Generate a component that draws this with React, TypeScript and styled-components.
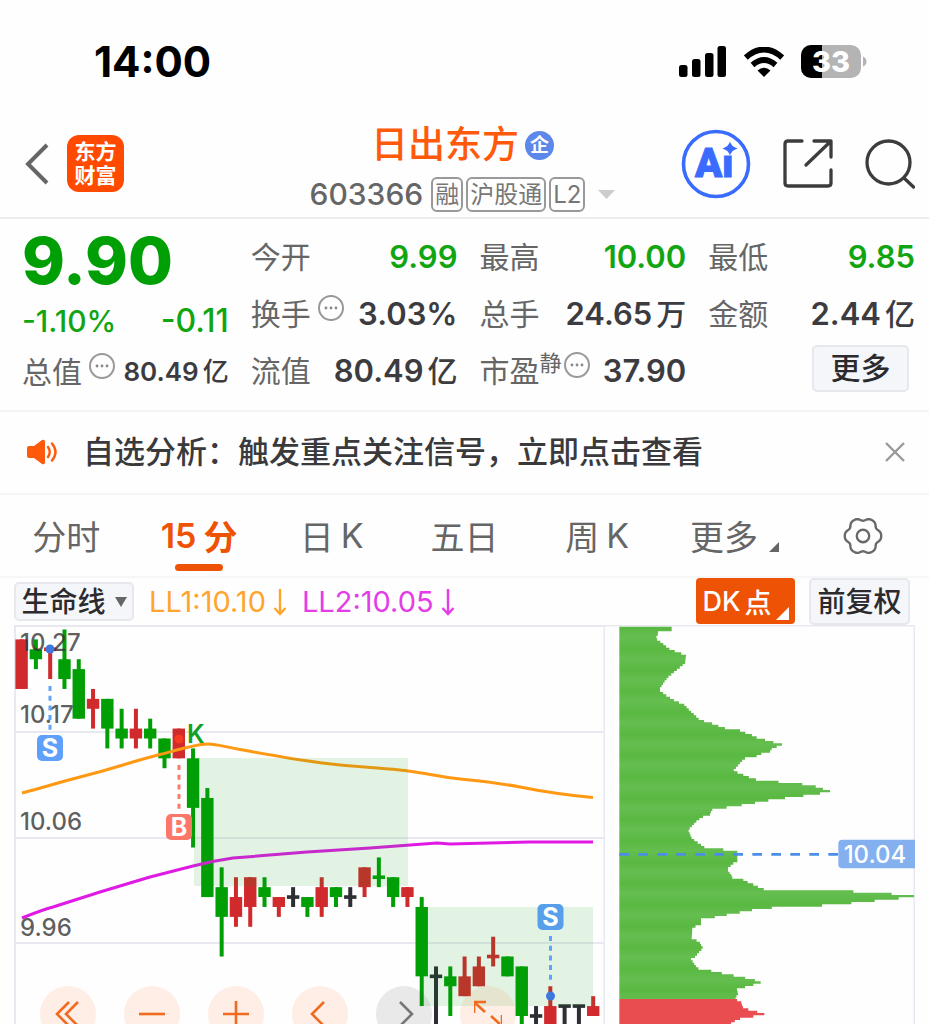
import React from "react";
import styled, { createGlobalStyle } from "styled-components";

const GlobalStyle = createGlobalStyle`
  *, *::before, *::after { box-sizing: border-box; }
  body {
    margin: 0;
    background: #fefefe;
    font-family: Inter, "Noto Sans CJK SC", sans-serif;
    color: #333;
  }
  button { font: inherit; color: inherit; margin: 0; padding: 0; border: 0; background: none; cursor: pointer; }
  svg { display: block; }
`;

const ORANGE = "#ee5205";
const UP = "#d02a2c";
const DOWN = "#009f05";
const FLAT = "#2c2f33";

const Screen = styled.main`
  display: flex;
  flex-direction: column;
  height: 100vh;
  overflow: hidden;
  background: #fefefe;
`;

const StatusBar = styled.div`
  display: flex;
  align-items: center;
  justify-content: space-between;
  flex: none;
  height: 110px;
  padding: 13px 62px 0 94px;
`;

const Clock = styled.time`
  font-size: 42px;
  font-weight: 700;
  line-height: 48px;
  color: #000;
`;

const StatusIcons = styled.div`
  display: flex;
  align-items: center;
  gap: 17px;
`;

const Header = styled.header`
  display: grid;
  grid-template-columns: 1fr auto 1fr;
  align-items: center;
  flex: none;
  height: 109px;
  padding: 0 14px 0 25px;
  border-bottom: 2px solid #ededed;
`;

const HeaderSide = styled.div<{ $end?: boolean; $gap: number }>`
  display: flex;
  align-items: center;
  justify-content: ${(p) => (p.$end ? "flex-end" : "flex-start")};
  gap: ${(p) => p.$gap}px;
`;

const IconButton = styled.button`
  display: flex;
  align-items: center;
  justify-content: center;
`;

const BrandLogo = styled.a`
  display: grid;
  place-content: center;
  width: 57px;
  height: 57px;
  border-radius: 12px;
  background: #ff4a00;
  color: #fff;
  font-size: 21px;
  font-weight: 700;
  line-height: 24px;
  text-decoration: none;
`;

const Identity = styled.div`
  display: flex;
  flex-direction: column;
  align-items: center;
  gap: 10px;
  margin-right: 15px;
  padding-top: 8px;
`;

const NameRow = styled.div`
  display: flex;
  align-items: center;
  gap: 6px;
`;

const StockName = styled.h1`
  margin: 0;
  font-size: 37px;
  font-weight: 500;
  line-height: 44px;
  color: #ff5a0a;
`;

const KindBadge = styled.span`
  display: grid;
  place-items: center;
  width: 29px;
  height: 29px;
  border-radius: 50%;
  background: #5d88ea;
  color: #fff;
  font-size: 19px;
  font-weight: 700;
  line-height: 19px;
`;

const CodeRow = styled.div`
  display: flex;
  align-items: center;
  gap: 3px;
  height: 35px;
`;

const Code = styled.span`
  margin-right: 5px;
  font-size: 30px;
  font-weight: 500;
  line-height: 35px;
  color: #666;
`;

const Tag = styled.span`
  height: 35px;
  padding: 0 2px;
  border: 2px solid #999;
  border-radius: 6px;
  font-size: 24px;
  line-height: 31px;
  color: #777;
`;

const Caret = styled.svg`
  margin-left: 10px;
`;

const Quote = styled.section`
  display: grid;
  grid-template-columns: repeat(4, 1fr);
  column-gap: 22px;
  flex: none;
  height: 193px;
  padding: 9px 14px 11px 22px;
  border-bottom: 2px solid #f4f4f4;
`;

const Column = styled.div<{ $lead?: boolean }>`
  display: grid;
  grid-template-rows: ${(p) => (p.$lead ? "66px 54px 48px" : "57px 57px 57px")};
  align-items: center;
  align-content: start;
`;

const Price = styled.strong`
  font-size: 65px;
  font-weight: 800;
  line-height: 66px;
  color: ${DOWN};
`;

const Row = styled.div`
  display: flex;
  align-items: center;
  justify-content: space-between;
  white-space: nowrap;
`;

const Label = styled.span`
  display: flex;
  align-items: center;
  font-size: 30px;
  line-height: 40px;
  color: #666;
`;

const Sup = styled.sup`
  align-self: flex-start;
  font-size: 22px;
  line-height: 24px;
`;

const InfoButton = styled(IconButton)<{ $tight?: boolean }>`
  margin: 0 0 12px ${(p) => (p.$tight ? 2 : 7)}px;
`;

const Value = styled.span<{ $down?: boolean; $size?: number; $weight?: number }>`
  display: flex;
  align-items: center;
  gap: 4px;
  font-size: ${(p) => p.$size ?? 31}px;
  font-weight: ${(p) => p.$weight ?? 600};
  line-height: 40px;
  color: ${(p) => (p.$down ? "#12a512" : "#3c3c40")};
`;

const Unit = styled.span<{ $size?: number }>`
  font-size: ${(p) => p.$size ?? 30}px;
  font-weight: 500;
`;

const Chip = styled.button<{ $w: number; $h: number; $size: number }>`
  display: flex;
  align-items: center;
  justify-content: center;
  gap: 9px;
  width: ${(p) => p.$w}px;
  height: ${(p) => p.$h}px;
  border: 2px solid #e7e8ed;
  border-radius: 5px;
  background: #f5f6f9;
  color: #2b2b2e;
  font-size: ${(p) => p.$size}px;
  font-weight: 500;
  line-height: 1;
`;

const MoreCell = styled.div`
  display: flex;
  justify-content: flex-end;
  padding: 0 6px 5px 0;
`;

const Notice = styled.section`
  display: flex;
  align-items: center;
  flex: none;
  height: 83px;
  padding: 0 24px 2px 26px;
  border-bottom: 2px solid #f4f4f4;
`;

const NoticeLink = styled.a`
  flex: 1;
  margin-left: 25px;
  font-size: 31px;
  font-weight: 500;
  line-height: 40px;
  white-space: nowrap;
  color: #3a3a3c;
  text-decoration: none;
`;

const Tabs = styled.nav`
  display: grid;
  grid-template-columns: repeat(7, 1fr);
  flex: none;
  height: 83px;
  border-bottom: 2px solid #f6f6f6;
`;

const Tab = styled.button<{ $active?: boolean; $menu?: boolean }>`
  position: relative;
  display: flex;
  align-items: center;
  justify-content: center;
  gap: 7px;
  padding-left: ${(p) => (p.$menu ? 9 : 0)}px;
  font-size: 34px;
  font-weight: ${(p) => (p.$active ? 600 : 400)};
  color: ${(p) => (p.$active ? ORANGE : "#666")};

  &::after {
    content: "";
    display: ${(p) => (p.$active ? "block" : "none")};
    position: absolute;
    bottom: 5px;
    width: 48px;
    height: 7px;
    border-radius: 4px;
    background: ${ORANGE};
  }
`;

const CornerMark = styled.svg`
  align-self: flex-end;
  margin: 0 0 24px 4px;
`;

const Toolbar = styled.div`
  display: flex;
  align-items: center;
  flex: none;
  height: 47px;
  padding: 0 19px 0 14px;
`;

const Indicator = styled.span<{ $color: string }>`
  display: flex;
  align-items: center;
  gap: 7px;
  margin-left: 15px;
  font-size: 29px;
  line-height: 40px;
  color: ${(p) => p.$color};
`;

const ToolbarEnd = styled.div`
  display: flex;
  gap: 14px;
  margin-left: auto;
`;

const SignalButton = styled.button`
  display: flex;
  align-items: center;
  justify-content: center;
  gap: 4px;
  width: 99px;
  height: 46px;
  border-radius: 4px;
  background: ${ORANGE};
  color: #fff;
  font-size: 27px;
  font-weight: 500;
`;

const SignalCorner = styled.svg`
  align-self: flex-end;
  margin-bottom: 4px;
`;

const Chart = styled.section`
  position: relative;
  display: flex;
  align-items: flex-start;
  flex: 1;
  min-height: 0;
  margin: 0 14px;
  overflow: hidden;
`;

const PlotPane = styled.div<{ $share: number }>`
  flex: ${(p) => p.$share} 1 0;
  min-width: 0;

  svg { width: 100%; height: auto; font-family: Inter, sans-serif; }
`;

const Controls = styled.div`
  position: absolute;
  left: 26px;
  bottom: -18px;
  display: flex;
  gap: 28px;
`;

const RoundButton = styled.button<{ $muted?: boolean }>`
  display: grid;
  place-items: center;
  width: 56px;
  height: 56px;
  border-radius: 50%;
  background: ${(p) => (p.$muted ? "rgba(60, 60, 60, 0.11)" : "rgba(255, 110, 40, 0.11)")};
  color: ${(p) => (p.$muted ? "#777" : "#f06a20")};
`;

const Info = ({ label, tight }: { label: string; tight?: boolean }) => (
  <InfoButton $tight={tight} aria-label={label}>
    <svg width="26" height="26" viewBox="0 0 26 26">
      <circle cx="13" cy="13" r="12" fill="none" stroke="#999" strokeWidth="2" />
      <circle cx="8" cy="13" r="1.4" fill="#888" />
      <circle cx="13" cy="13" r="1.4" fill="#888" />
      <circle cx="18" cy="13" r="1.4" fill="#888" />
    </svg>
  </InfoButton>
);

const DownArrow = () => (
  <svg width="14" height="28" viewBox="0 0 14 28" fill="none" stroke="currentColor" strokeWidth="2.4">
    <path d="M7 1V25.500M1.500 20L7 26L12.500 20" />
  </svg>
);

const gearPath =
  Array.from({ length: 120 }, (_, i) => {
    const a = (i / 120) * Math.PI * 2;
    const r = 17 + 1.5 * Math.cos(6 * a) - 0.3 * Math.cos(12 * a);
    return `${i ? "L" : "M"}${(20 + r * Math.cos(a)).toFixed(2)} ${(20 + r * Math.sin(a)).toFixed(2)}`;
  }).join("") + "Z";

type Kind = "u" | "d" | "f";
/* kind, high, body top, body bottom, low: counted in price ticks below the top of the scale */
const candles: [Kind, number, number, number, number][] = [
  ["u", 0, 0, 5, 5], ["d", 0, 1, 2, 3], ["u", 1, 1, 1, 4], ["d", -1, 2, 4, 5],
  ["d", 2, 3, 8, 8], ["u", 5, 6, 7, 9], ["d", 6, 6, 9, 11], ["d", 7, 9, 10, 11],
  ["u", 7, 9, 10, 11], ["d", 8, 9, 10, 11], ["d", 10, 10, 12, 13], ["u", 9, 9, 12, 12],
  ["d", 11, 12, 17, 21], ["d", 15, 16, 26, 26], ["d", 23, 25, 28, 32], ["u", 24, 26, 28, 29],
  ["u", 24, 24, 27, 29], ["d", 24, 25, 26, 27], ["u", 26, 26, 27, 28], ["f", 25, 26, 26, 27],
  ["d", 26, 26, 27, 28], ["u", 24, 25, 27, 28], ["d", 25, 25, 26, 27], ["f", 25, 26, 26, 27],
  ["u", 23, 23, 25, 26], ["d", 22, 24, 24, 25], ["d", 24, 24, 26, 27], ["u", 25, 25, 26, 27],
  ["d", 26, 27, 34, 37], ["f", 33, 34, 34, 40], ["d", 33, 34, 35, 38], ["u", 32, 34, 36, 36],
  ["u", 32, 33, 35, 35], ["u", 30, 32, 32, 33], ["d", 32, 32, 34, 34], ["d", 33, 33, 38, 40],
  ["f", 37, 38, 38, 40], ["u", 35, 37, 40, 40], ["f", 37, 37, 37, 40], ["f", 37, 37, 37, 40],
  ["u", 36, 37, 38, 38],
];
const tickY = (t: number) => 639.4 + t * 9.91;
const candleX = (i: number) => 21.6 + i * 14.29;
const candleColor: Record<Kind, string> = { u: UP, d: DOWN, f: FLAT };

const Marker = ({ x, y, letter, color }: { x: number; y: number; letter: string; color: string }) => (
  <g>
    <rect x={x - 13} y={y - 13} width="26" height="26" rx="5" fill={color} />
    <text x={x} y={y + 9} textAnchor="middle" fontSize="25" fontWeight="700" fill="#fff">{letter}</text>
  </g>
);

const CandlePlot = () => (
  <svg viewBox="14 625 591 399" role="img" aria-label="15分 K线">
    <g stroke="#e8e9f0" strokeWidth="2">
      <path d="M14 626H605M15 626V1024M604.500 626V1024M15 732H604M15 838H604M15 943H604" fill="none" />
    </g>
    {candles.map(([k, hi, top, bot, lo], i) => {
      const x = candleX(i);
      const flat = top === bot;
      return (
        <g key={i} fill={candleColor[k]}>
          <rect x={x - 2} y={tickY(hi)} width="4" height={tickY(lo) - tickY(hi)} />
          <rect x={x - 6.2} y={flat ? tickY(top) - 1.8 : tickY(top)} width="12.4" height={flat ? 3.6 : tickY(bot) - tickY(top)} />
        </g>
      );
    })}
    <g fill="none" strokeWidth="3" strokeLinejoin="round">
      <path stroke="#ff9812" d="M22 793C42 788 60 782 80 777S110 769 123 765S146 758 158 755S176 750 187 747.500S200 744 208 744S226 747 240 749.500S290 759 322 763S385 768 408 771S440 777 460 779S500 783 520 787S565 795 593 797.500" />
      <path stroke="#e01ae4" d="M22 918C32 914 42 910 53 907L100 892L150 877L193 866Q212 861 233 858L307 852L370 848L437 843L450 844L530 842L593 842" />
    </g>
    <g fill="#0aa018" fillOpacity="0.112">
      <rect x="194" y="758" width="214" height="128" />
      <rect x="422" y="907" width="171" height="99" />
    </g>
    <g fontSize="24" fontWeight="500" fill="#333" fillOpacity="0.78">
      <text x="20" y="651">10.27</text>
      <text x="20" y="723">10.17</text>
      <text x="20" y="830">10.06</text>
      <text x="20" y="936">9.96</text>
    </g>
    <g strokeWidth="3" strokeDasharray="5 4.700">
      <path d="M50 686V730M550.500 936V980" stroke="#5fa3fb" />
      <path d="M179 765V809" stroke="#fb7b6b" />
    </g>
    <g fill="#3f78dc">
      <circle cx="50" cy="649" r="4.500" />
      <circle cx="550.500" cy="996" r="4.500" />
    </g>
    <circle cx="179" cy="739" r="4.500" fill="#f53a22" />
    <Marker x={50} y={748} letter="S" color="#5fa0fb" />
    <Marker x={179} y={827} letter="B" color="#fb7868" />
    <Marker x={550.5} y={917} letter="S" color="#579fea" />
    <text x="187" y="743" fontSize="25" fontWeight="600" fill="#12a022">K</text>
  </svg>
);

/* [depth, reach] pairs of the chip distribution, at three units to the pixel */
const profile: [number, number][] = [
  [20, 200], [27, 200], [30, 160], [45, 158], [55, 152], [70, 172], [85, 190], [92, 205], [100, 228],
  [108, 243], [130, 240], [150, 215], [175, 185], [210, 162], [235, 195], [255, 238], [275, 258],
  [300, 285], [310, 320], [325, 360], [333, 405], [345, 440], [355, 455], [362, 480], [368, 505],
  [374, 531], [380, 515], [386, 500], [395, 495], [405, 455], [413, 420], [430, 405], [452, 385],
  [465, 415], [478, 448], [485, 515], [491, 582], [498, 628], [505, 648], [512, 675], [518, 645],
  [524, 595], [532, 540], [540, 490], [547, 450], [553, 410], [561, 365], [568, 322], [582, 315],
  [595, 283], [630, 250], [655, 260], [685, 303], [690, 355], [697, 397], [720, 397], [747, 366],
  [770, 382], [776, 373], [780, 415], [795, 445], [811, 485], [816, 745], [823, 860], [830, 927],
  [838, 860], [844, 792], [852, 715], [858, 630], [865, 465], [873, 430], [880, 390], [886, 357],
  [893, 322], [898, 288], [910, 288], [925, 262], [955, 260], [965, 283], [985, 293], [1010, 270],
  [1017, 258], [1045, 277], [1050, 308], [1058, 343], [1065, 378], [1071, 410], [1078, 440],
  [1085, 467], [1092, 445], [1098, 420], [1105, 395], [1120, 399], [1138, 390], [1145, 408],
  [1165, 415], [1172, 445], [1182, 478], [1188, 445], [1195, 405], [1214, 370],
];
const reachAt = (y: number) => {
  const i = Math.max(1, profile.findIndex(([py]) => py >= y));
  const [y0, x0] = profile[i - 1];
  const [y1, x1] = profile[i];
  return x0 + ((x1 - x0) * Math.min(1, Math.max(0, (y - y0) / (y1 - y0))));
};
const STEP = 7;
const outline = (from: number, to: number) => {
  let d = `M43 ${from}`;
  for (let y = from; y < to; y += STEP) {
    const end = Math.min(y + STEP, to);
    const peaks = profile.filter(([py]) => py >= y && py < end).map(([, x]) => x);
    d += `H${Math.max(reachAt((y + end) / 2), ...peaks).toFixed(1)}V${end}`;
  }
  return d + "H43Z";
};

const ProfilePlot = () => (
  <svg viewBox="0 15 930 1197" role="img" aria-label="筹码分布">
    <defs>
      <linearGradient id="bands" gradientUnits="userSpaceOnUse" x1="0" y1="20" x2="0" y2="84" spreadMethod="repeat">
        <stop offset="0" stopColor="#58b840" />
        <stop offset="0.5" stopColor="#65be50" />
        <stop offset="1" stopColor="#5ab842" />
      </linearGradient>
    </defs>
    <path d="M0 17H930M928 17V1212" stroke="#e8e9f0" strokeWidth="5" fill="none" />
    <path d={outline(20, 1137)} fill="url(#bands)" />
    <path d={outline(1137, 1212)} fill="#ea4d4f" />
    <path d="M43 703H700" stroke="#4a8ee8" strokeWidth="8" strokeDasharray="29 28" />
    <path d="M712 659H930V745H712Q700 745 700 733V671Q700 659 712 659Z" fill="#84b0ef" />
    <text x="716" y="728" fontSize="72" fontWeight="500" fill="#fff">10.04</text>
  </svg>
);

const stroke = { fill: "none", stroke: "currentColor", strokeWidth: 2.6 } as const;

export default function App() {
  return (
    <>
      <GlobalStyle />
      <Screen>
        <StatusBar>
          <Clock>14:00</Clock>
          <StatusIcons>
            <svg width="48" height="31" viewBox="0 0 48 31" fill="#000">
              <rect x="0" y="19" width="8.500" height="12" rx="2.500" />
              <rect x="13" y="13" width="8.500" height="18" rx="2.500" />
              <rect x="26" y="7" width="8.500" height="24" rx="2.500" />
              <rect x="38.500" y="0" width="8.500" height="31" rx="2.500" />
            </svg>
            <svg width="40" height="30" viewBox="0 0 40 30" fill="none" stroke="#000" strokeWidth="5.800">
              <path d="M1.800 10.500Q20 -5.500 38.200 10.500" />
              <path d="M8.500 18Q20 8 31.500 18" />
              <path d="M13.500 23.500Q20 18 26.500 23.500L20 30Z" fill="#000" stroke="none" />
            </svg>
            <svg width="66" height="33" viewBox="0 0 66 33">
              <clipPath id="cell"><rect width="60" height="33" rx="10" /></clipPath>
              <g clipPath="url(#cell)">
                <rect width="60" height="33" fill="#b4b4b4" />
                <rect width="21" height="33" fill="#000" />
              </g>
              <path d="M62 11.500Q65.500 13 65.500 16.500T62 21.500Z" fill="#b4b4b4" />
              <text x="30" y="27" textAnchor="middle" fontSize="29" fontWeight="800" fill="#fff">33</text>
            </svg>
          </StatusIcons>
        </StatusBar>

        <Header>
          <HeaderSide $gap={18}>
            <IconButton aria-label="返回">
              <svg width="24" height="42" viewBox="0 0 24 42" fill="none" stroke="#666" strokeWidth="4">
                <path d="M22 2L3 21L22 40" />
              </svg>
            </IconButton>
            <BrandLogo href="#home">
              <span>东方</span>
              <span>财富</span>
            </BrandLogo>
          </HeaderSide>
          <Identity>
            <NameRow>
              <StockName>日出东方</StockName>
              <KindBadge>企</KindBadge>
            </NameRow>
            <CodeRow>
              <Code>603366</Code>
              <Tag>融</Tag>
              <Tag>沪股通</Tag>
              <Tag>L2</Tag>
              <Caret width="17" height="9" viewBox="0 0 17 9"><path d="M0 0H17L8.500 9Z" fill="#ccc" /></Caret>
            </CodeRow>
          </Identity>
          <HeaderSide $end $gap={32}>
            <IconButton aria-label="AI">
              <svg width="70" height="70" viewBox="0 0 70 70">
                <circle cx="35" cy="35" r="32.500" fill="none" stroke="#3a6bff" strokeWidth="3.600" />
                <text x="14" y="48" fontFamily="Roboto" fontSize="40" fontWeight="900" fill="#3a6bff" stroke="#3a6bff">Ai</text>
                <rect x="41" y="14" width="16" height="12.500" fill="#fefefe" />
                <path d="M49 14.500Q50.500 18 54.500 19.500Q50.500 21 49 24.500Q47.500 21 43.500 19.500Q47.500 18 49 14.500Z" fill="#3a6bff" stroke="#3a6bff" strokeWidth="1.500" />
              </svg>
            </IconButton>
            <IconButton aria-label="分享">
              <svg width="50" height="50" viewBox="0 0 50 50" fill="none" stroke="#3c3c3c" strokeWidth="3.300" strokeLinecap="round" strokeLinejoin="round">
                <path d="M19 2H5Q2 2 2 5V44Q2 47 5 47H45Q48 47 48 44V31" />
                <path d="M31 2H48V18M47 3L23 26" />
              </svg>
            </IconButton>
            <IconButton aria-label="搜索">
              <svg width="50" height="50" viewBox="0 0 50 50" fill="none" stroke="#3c3c3c" strokeWidth="3.300" strokeLinecap="round">
                <circle cx="23.500" cy="23.500" r="21.500" />
                <path d="M39 39L48.500 48" />
              </svg>
            </IconButton>
          </HeaderSide>
        </Header>

        <Quote>
          <Column $lead>
            <Price>9.90</Price>
            <Row>
              <Value $down $size={30} $weight={500}>-1.10%</Value>
              <Value $down $size={32} $weight={500}>-0.11</Value>
            </Row>
            <Row>
              <Label>总值<Info label="总值说明" /></Label>
              <Value $size={26}>80.49<Unit $size={26}>亿</Unit></Value>
            </Row>
          </Column>
          <Column>
            <Row><Label>今开</Label><Value $down>9.99</Value></Row>
            <Row><Label>换手<Info label="换手说明" /></Label><Value>3.03%</Value></Row>
            <Row><Label>流值</Label><Value>80.49<Unit>亿</Unit></Value></Row>
          </Column>
          <Column>
            <Row><Label>最高</Label><Value $down>10.00</Value></Row>
            <Row><Label>总手</Label><Value>24.65<Unit>万</Unit></Value></Row>
            <Row><Label>市盈<Sup>静</Sup><Info tight label="市盈说明" /></Label><Value>37.90</Value></Row>
          </Column>
          <Column>
            <Row><Label>最低</Label><Value $down>9.85</Value></Row>
            <Row><Label>金额</Label><Value>2.44<Unit>亿</Unit></Value></Row>
            <MoreCell><Chip $w={97} $h={47} $size={30}>更多</Chip></MoreCell>
          </Column>
        </Quote>

        <Notice>
          <svg width="32" height="26" viewBox="0 0 32 26">
            <path d="M1 9Q1 7 3 7H8L16 1Q19 0 19 3V23Q19 26 16 25L8 19H3Q1 19 1 17Z" fill="#ff5a0a" />
            <path d="M22 8Q25.500 13 22 18M26 4.500Q33 13 26 21.500" fill="none" stroke="#ff5a0a" strokeWidth="2.400" strokeLinecap="round" />
          </svg>
          <NoticeLink href="#signal">自选分析：触发重点关注信号，立即点击查看</NoticeLink>
          <IconButton aria-label="关闭">
            <svg width="20" height="20" viewBox="0 0 20 20" fill="none" stroke="#999" strokeWidth="2.400">
              <path d="M1 1L19 19M19 1L1 19" />
            </svg>
          </IconButton>
        </Notice>

        <Tabs>
          <Tab>分时</Tab>
          <Tab $active><span>15</span><span>分</span></Tab>
          <Tab><span>日</span><span>K</span></Tab>
          <Tab>五日</Tab>
          <Tab><span>周</span><span>K</span></Tab>
          <Tab $menu>
            更多
            <CornerMark width="10" height="10" viewBox="0 0 10 10"><path d="M10 0V10H0Z" fill="#666" /></CornerMark>
          </Tab>
          <Tab aria-label="设置">
            <svg width="40" height="40" viewBox="0 0 40 40" fill="none" stroke="#6a6a6a" strokeWidth="2.400">
              <path d={gearPath} />
              <circle cx="20" cy="20" r="6.200" />
            </svg>
          </Tab>
        </Tabs>

        <Toolbar>
          <Chip $w={120} $h={39} $size={28}>
            生命线
            <svg width="12" height="10" viewBox="0 0 12 10"><path d="M0 0H12L6 10Z" fill="#666" /></svg>
          </Chip>
          <Indicator $color="#ffa42c">LL1:10.10<DownArrow /></Indicator>
          <Indicator $color="#e43de8">LL2:10.05<DownArrow /></Indicator>
          <ToolbarEnd>
            <SignalButton>
              <span>DK</span>
              <span>点</span>
              <SignalCorner width="13" height="13" viewBox="0 0 13 13"><path d="M13 0V13H0Z" fill="#fff" /></SignalCorner>
            </SignalButton>
            <Chip $w={101} $h={47} $size={28}>前复权</Chip>
          </ToolbarEnd>
        </Toolbar>

        <Chart>
          <PlotPane $share={591}><CandlePlot /></PlotPane>
          <PlotPane $share={310}><ProfilePlot /></PlotPane>
          <Controls>
            <RoundButton aria-label="最早">
              <svg width="28" height="28" viewBox="0 0 28 28" {...stroke}><path d="M15 2L3 14L15 26M24 2L12 14L24 26" /></svg>
            </RoundButton>
            <RoundButton aria-label="缩小">
              <svg width="28" height="28" viewBox="0 0 28 28" {...stroke}><path d="M1 14H27" /></svg>
            </RoundButton>
            <RoundButton aria-label="放大">
              <svg width="28" height="28" viewBox="0 0 28 28" {...stroke}><path d="M1 14H27M14 1V27" /></svg>
            </RoundButton>
            <RoundButton aria-label="前移">
              <svg width="28" height="28" viewBox="0 0 28 28" {...stroke}><path d="M18 2L6 14L18 26" /></svg>
            </RoundButton>
            <RoundButton $muted aria-label="后移">
              <svg width="28" height="28" viewBox="0 0 28 28" {...stroke}><path d="M10 2L22 14L10 26" /></svg>
            </RoundButton>
            <RoundButton aria-label="全屏">
              <svg width="28" height="28" viewBox="0 0 28 28" {...stroke}><path d="M0 13V2H12M0 2L11 12M28 15V26H16M28 26L17 16" /></svg>
            </RoundButton>
          </Controls>
        </Chart>
      </Screen>
    </>
  );
}
